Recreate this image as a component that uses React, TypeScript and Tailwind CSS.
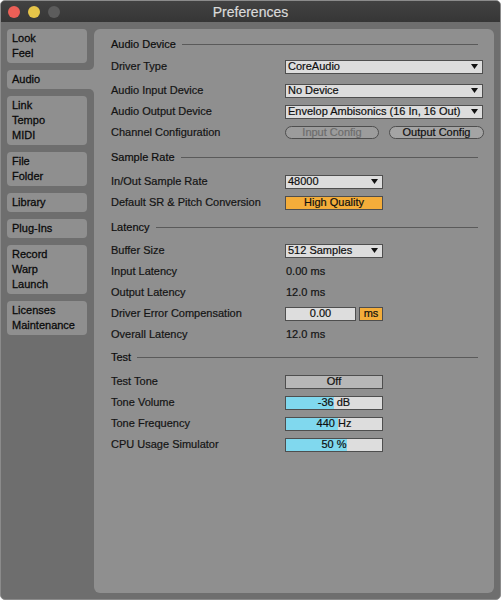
import React from 'react';

const PANEL = 'bg-[#8f8f8f]';

function Arrow() {
  return (
    <svg width="7" height="5" viewBox="0 0 7 5" className="shrink-0">
      <polygon points="0,0 7,0 3.5,5" fill="#111" />
    </svg>
  );
}

function Select({ value, wide }: { value: string; wide?: boolean }) {
  return (
    <div
      className={`${wide ? 'w-[198px]' : 'w-[98px]'} h-[14px] border border-[#4e4e4e] bg-[#dddddd] flex items-center justify-between pl-[2px] pr-[4px] text-[11px] leading-none text-[#0d0d0d]`}
    >
      <span>{value}</span>
      <Arrow />
    </div>
  );
}

function Slider({ text, fill }: { text: string; fill: number }) {
  return (
    <div className="w-[98px] h-[14px] border border-[#4e4e4e] bg-[#dddddd] grid overflow-hidden text-[11px] leading-none text-[#0d0d0d]">
      <div className="col-start-1 row-start-1 h-full bg-[#80d8ee]" style={{ width: fill }} />
      <div className="col-start-1 row-start-1 flex items-center justify-center">{text}</div>
    </div>
  );
}

function Header({ title, className = '' }: { title: string; className?: string }) {
  return (
    <div className={`flex items-center h-[21px] mr-[6px] ${className}`}>
      <span className="text-[#0a0a0a]">{title}</span>
      <div className="flex-1 h-px bg-[#5a5a5a] ml-[6px]" />
    </div>
  );
}

function Row({ label, children, className = '' }: { label: string; children?: React.ReactNode; className?: string }) {
  return (
    <div className={`flex items-center h-[21px] ${className}`}>
      <span className="w-[174px] shrink-0 text-[#141414]">{label}</span>
      {children}
    </div>
  );
}

function Value({ text }: { text: string }) {
  return <span className="pl-[1px] text-[#141414]">{text}</span>;
}

const sideGroups = [
  ['File', 'Folder'],
  ['Library'],
  ['Plug-Ins'],
  ['Record', 'Warp', 'Launch'],
  ['Licenses', 'Maintenance'],
];

function SideBox({ items }: { items: string[] }) {
  return (
    <div className={`w-[80px] ${PANEL} rounded-[4px] px-[5px] py-[2px] leading-[15px] [-webkit-text-stroke:0.28px_#0a0a0a]`}>
      {items.map((t) => (
        <div key={t}>{t}</div>
      ))}
    </div>
  );
}

export default function App() {
  return (
    <div className="w-[501px] h-[600px] bg-[#6e6e6e] border border-[#8b8b8b] rounded-[5px] overflow-hidden flex flex-col font-['Liberation_Sans',Arial,sans-serif] text-[11px]">
      {/* Title bar */}
      <div className="h-[21px] shrink-0 bg-gradient-to-b from-[#424242] to-[#363636] grid grid-cols-[1fr_auto_1fr] items-center">
        <div className="flex items-center gap-[8px] pl-[7px]">
          <div className="w-[12px] h-[12px] rounded-full bg-[#ec5f57]" />
          <div className="w-[12px] h-[12px] rounded-full bg-[#e6c549]" />
          <div className="w-[12px] h-[12px] rounded-full bg-[#5c5c5c]" />
        </div>
        <div className="text-[14px] text-[#dadada] leading-none [-webkit-text-stroke:0.2px_#dadada]">Preferences</div>
        <div />
      </div>

      {/* Body */}
      <div className="flex flex-1 pt-[7px] pb-[6px] pl-[6px] pr-[7px] text-[#0a0a0a] [-webkit-text-stroke:0.2px_#141414]">
        {/* Sidebar */}
        <div className="w-[87px] shrink-0 flex flex-col gap-[7px]">
          <SideBox items={['Look', 'Feel']} />
          <div className={`relative w-[87px] h-[19px] ${PANEL} rounded-l-[4px] px-[5px] flex items-center [-webkit-text-stroke:0.28px_#0a0a0a]`}>
            Audio
            <div className={`absolute right-0 -top-[5px] w-[5px] h-[5px] ${PANEL}`}>
              <div className="w-full h-full bg-[#6e6e6e] rounded-br-[5px]" />
            </div>
            <div className={`absolute right-0 top-full w-[5px] h-[5px] ${PANEL}`}>
              <div className="w-full h-full bg-[#6e6e6e] rounded-tr-[5px]" />
            </div>
          </div>
          <SideBox items={['Link', 'Tempo', 'MIDI']} />
          {sideGroups.map((g) => (
            <SideBox key={g[0]} items={g} />
          ))}
        </div>

        {/* Main panel */}
        <div className={`flex-1 ${PANEL} rounded-[6px] pt-[5px] pl-[17px] pr-[10px]`}>
          <Header title="Audio Device" />
          <Row label="Driver Type" className="mt-[1px]">
            <Select value="CoreAudio" wide />
          </Row>
          <Row label="Audio Input Device" className="mt-[3px]">
            <Select value="No Device" wide />
          </Row>
          <Row label="Audio Output Device">
            <Select value="Envelop Ambisonics (16 In, 16 Out)" wide />
          </Row>
          <Row label="Channel Configuration">
            <div className="flex gap-[10px]">
              <div className="w-[94px] h-[13px] rounded-full border border-[#4e4e4e] bg-[#9c9c9c] flex items-center justify-center leading-none text-[#6c6c6c] [-webkit-text-stroke:0.2px_#6c6c6c]">
                Input Config
              </div>
              <div className="w-[95px] h-[13px] rounded-full border border-[#4e4e4e] bg-[#a4a4a4] flex items-center justify-center leading-none text-[#0d0d0d]">
                Output Config
              </div>
            </div>
          </Row>

          <Header title="Sample Rate" className="mt-[4px]" />
          <Row label="In/Out Sample Rate" className="mt-[3px]">
            <Select value="48000" />
          </Row>
          <Row label="Default SR & Pitch Conversion">
            <div className="w-[98px] h-[14px] border border-[#4e4e4e] bg-[#f4ad3a] flex items-center justify-center leading-none text-[#0d0d0d]">
              High Quality
            </div>
          </Row>

          <Header title="Latency" className="mt-[4px]" />
          <Row label="Buffer Size" className="mt-[2px]">
            <Select value="512 Samples" />
          </Row>
          <Row label="Input Latency">
            <Value text="0.00 ms" />
          </Row>
          <Row label="Output Latency">
            <Value text="12.0 ms" />
          </Row>
          <Row label="Driver Error Compensation">
            <div className="flex gap-[3px]">
              <div className="w-[71px] h-[14px] border border-[#4e4e4e] bg-[#dddddd] flex items-center justify-center leading-none text-[#0d0d0d]">
                0.00
              </div>
              <div className="w-[24px] h-[14px] border border-[#4e4e4e] bg-[#f4ad3a] flex items-center justify-center leading-none text-[#0d0d0d]">
                ms
              </div>
            </div>
          </Row>
          <Row label="Overall Latency">
            <Value text="12.0 ms" />
          </Row>

          <Header title="Test" className="mt-[2px]" />
          <Row label="Test Tone" className="mt-[3px]">
            <div className="w-[98px] h-[14px] border border-[#4e4e4e] bg-[#b7b7b7] flex items-center justify-center leading-none text-[#0d0d0d]">
              Off
            </div>
          </Row>
          <Row label="Tone Volume">
            <Slider text="-36 dB" fill={48} />
          </Row>
          <Row label="Tone Frequency">
            <Slider text="440 Hz" fill={52} />
          </Row>
          <Row label="CPU Usage Simulator">
            <Slider text="50 %" fill={61} />
          </Row>
        </div>
      </div>
    </div>
  );
}
